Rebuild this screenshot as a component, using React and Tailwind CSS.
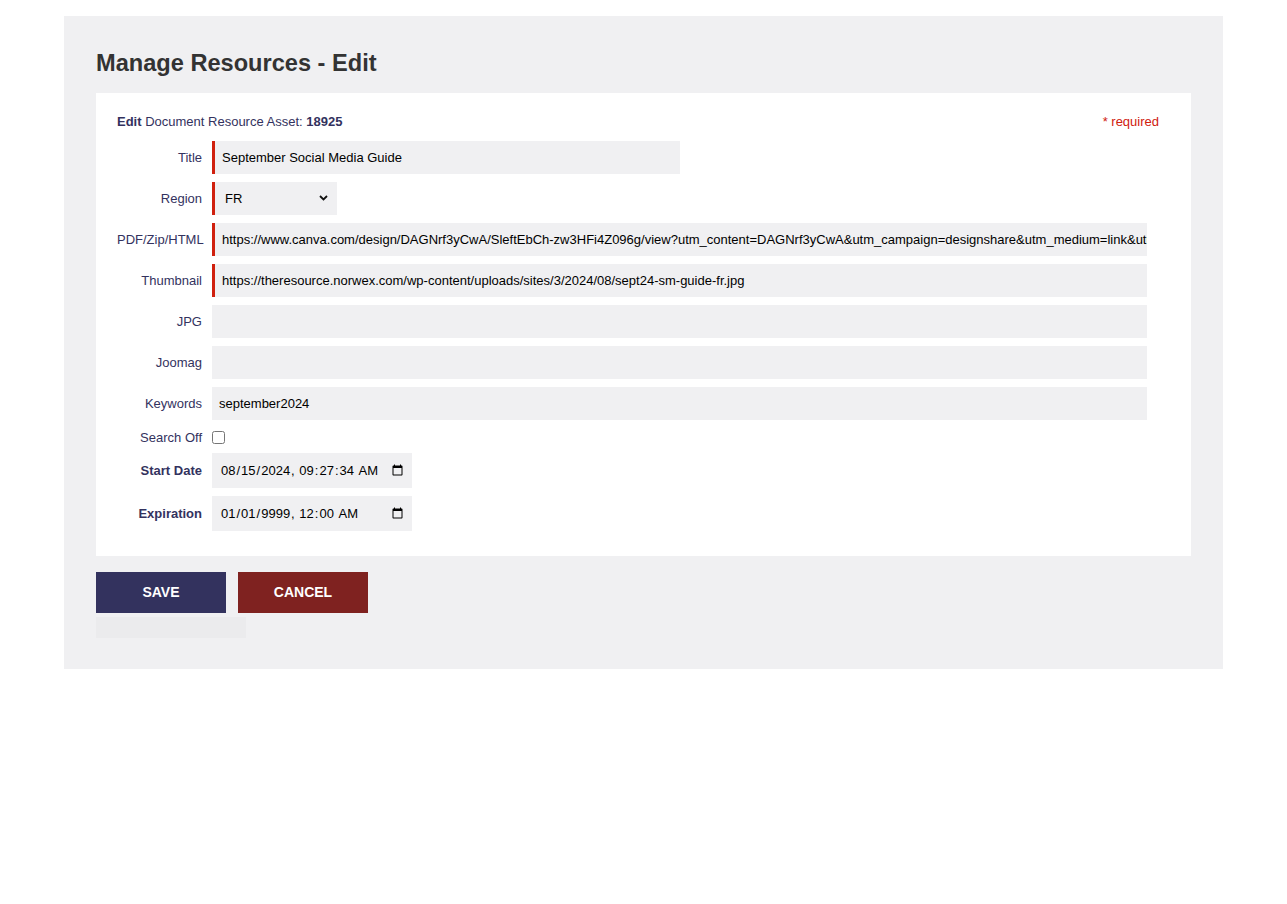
import React, { useState } from 'react';

const LABEL = 'w-[85px] shrink-0 text-right text-[13px] text-[#33325e]';
const INPUT = 'h-[33px] bg-[#f0f0f2] pl-[7px] text-[13px] text-black outline-none';
const REQ = 'border-l-[3px] border-[#d0200e]';

const Row = ({ label, bold, children }) => (
  <div className="flex items-center gap-[10px]">
    <label className={`${LABEL} ${bold ? 'font-bold' : ''}`}>{label}</label>
    {children}
  </div>
);

export default function App() {
  const [form, setForm] = useState({
    title: 'September Social Media Guide',
    region: 'FR',
    pdf: 'https://www.canva.com/design/DAGNrf3yCwA/SleftEbCh-zw3HFi4Z096g/view?utm_content=DAGNrf3yCwA&utm_campaign=designshare&utm_medium=link&utm_source=editor',
    thumb: 'https://theresource.norwex.com/wp-content/uploads/sites/3/2024/08/sept24-sm-guide-fr.jpg',
    jpg: '',
    joomag: '',
    keywords: 'september2024',
    searchOff: false,
    start: '2024-08-15T09:27:34',
    exp: '9999-01-01T00:00',
  });
  const set = k => e => setForm({ ...form, [k]: e.target.type === 'checkbox' ? e.target.checked : e.target.value });

  return (
    <div className="min-h-[904px] bg-white pt-4" style={{ fontFamily: '"Liberation Sans", Arial, sans-serif' }}>
      <div className="mx-16 bg-[#f0f0f2] px-8 pt-[33px] pb-[31px]">
        <h1 className="text-[23.6px] font-bold leading-[28px] text-[#333]">Manage Resources - Edit</h1>

        <div className="mt-[16px] bg-white pl-[21px] pr-[32px] pt-[21px] pb-[25px]">
          <div className="mb-[11px] flex items-center justify-between text-[13px] leading-4">
            <div className="text-[#33325e]">
              <b>Edit</b> Document Resource Asset: <b>18925</b>
            </div>
            <div className="text-[#d0200e]">* required</div>
          </div>

          <div className="flex flex-col gap-[8px]">
            <Row label="Title">
              <input className={`${INPUT} ${REQ} w-[468px]`} value={form.title} onChange={set('title')} />
            </Row>
            <Row label="Region">
              <div className={`relative ${REQ} h-[33px] w-[125px] bg-[#f0f0f2]`}>
                <select
                  className="h-full w-full appearance-none pl-[10px] text-[13px] text-black outline-none"
                  value={form.region}
                  onChange={set('region')}
                >
                  <option>FR</option>
                  <option>US</option>
                  <option>CA</option>
                  <option>DE</option>
                </select>
                <svg className="pointer-events-none absolute right-[9px] top-[13px]" width="9" height="6" viewBox="0 0 9 6">
                  <path d="M1 1l3.5 3.5L8 1" fill="none" stroke="#111" strokeWidth="1.8" />
                </svg>
              </div>
            </Row>
            <Row label="PDF/Zip/HTML">
              <input className={`${INPUT} ${REQ} w-[935px]`} value={form.pdf} onChange={set('pdf')} />
            </Row>
            <Row label="Thumbnail">
              <input className={`${INPUT} ${REQ} w-[935px]`} value={form.thumb} onChange={set('thumb')} />
            </Row>
            <Row label="JPG">
              <input className={`${INPUT} w-[935px]`} value={form.jpg} onChange={set('jpg')} />
            </Row>
            <Row label="Joomag">
              <input className={`${INPUT} w-[935px]`} value={form.joomag} onChange={set('joomag')} />
            </Row>
            <Row label="Keywords">
              <input className={`${INPUT} w-[935px]`} value={form.keywords} onChange={set('keywords')} />
            </Row>
            <div className="flex h-[17px] items-center gap-[10px] pt-[2px]">
              <label className={LABEL}>Search Off</label>
              <input type="checkbox" className="m-0 h-[13px] w-[13px]" checked={form.searchOff} onChange={set('searchOff')} />
            </div>
            <Row label="Start Date" bold>
              <input
                type="datetime-local"
                step="1"
                className="h-[35px] w-[200px] bg-[#f0f0f2] pl-[8px] pr-[6px] text-[13px] text-black outline-none"
                value={form.start}
                onChange={set('start')}
              />
            </Row>
            <Row label="Expiration" bold>
              <input
                type="datetime-local"
                className="h-[35px] w-[200px] bg-[#f0f0f2] pl-[8px] pr-[6px] text-[13px] text-black outline-none"
                value={form.exp}
                onChange={set('exp')}
              />
            </Row>
          </div>
        </div>

        <div className="mt-[16px] flex gap-[12px]">
          <button className="h-[41px] w-[130px] bg-[#33325e] text-[14px] font-bold text-white">SAVE</button>
          <button className="h-[41px] w-[130px] bg-[#7f2220] text-[14px] font-bold text-white">CANCEL</button>
        </div>
        <div className="mt-[4px] h-[21px] w-[150px] bg-[#ebebed]" />
      </div>
    </div>
  );
}
